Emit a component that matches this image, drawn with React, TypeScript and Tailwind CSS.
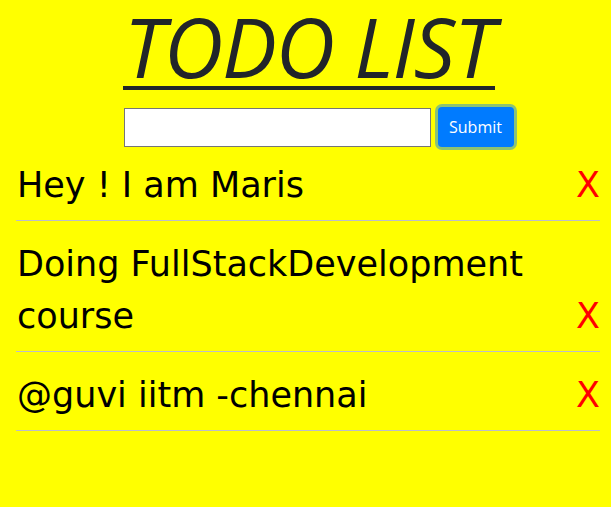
import React from "react";

const items = [
  "Hey ! I am Maris",
  "Doing FullStackDevelopment course",
  "@guvi iitm -chennai",
];

export default function App() {
  return (
    <div className="min-h-[507px] w-full bg-[#ffff00] pl-[16px] pr-[11px]" style={{ fontFamily: '"DejaVu Sans", Verdana, sans-serif' }}>
      <div className="flex justify-center pt-[6px] pl-[2px]">
        <h1
          className="text-[#212529] italic text-[82px] leading-[80px] tracking-[-1px] border-b-[4px] border-[#212529] px-[1px]"
          style={{ fontFamily: '"Open Sans", sans-serif', fontWeight: 400 }}
        >
          TODO LIST
        </h1>
      </div>
      <div className="flex justify-center items-center gap-[7px] mt-[17px] pl-[21px]">
        <input className="w-[307px] h-[39px] bg-white border border-[#767676] outline-none" />
        <button
          className="h-[40px] w-[76px] rounded-[4px] bg-[#007bff] text-white text-[16px] shadow-[0_0_0_3px_rgba(0,123,255,0.45)]"
          style={{ fontFamily: '"Open Sans", sans-serif' }}
        >
          Submit
        </button>
      </div>
      <ul className="mt-[12px]">
        {items.map((t, i) => (
          <li
            key={i}
            className={`flex items-end justify-between border-b border-[#bdbdc8] pb-[9px] ${i === 0 ? "pt-0" : "pt-[17px]"}`}
          >
            <span className="text-[35px] leading-[52px] text-black pl-[1px]">{t}</span>
            <span className="text-[35px] leading-[52px] text-[#ff0000] pl-[20px]">X</span>
          </li>
        ))}
      </ul>
    </div>
  );
}
